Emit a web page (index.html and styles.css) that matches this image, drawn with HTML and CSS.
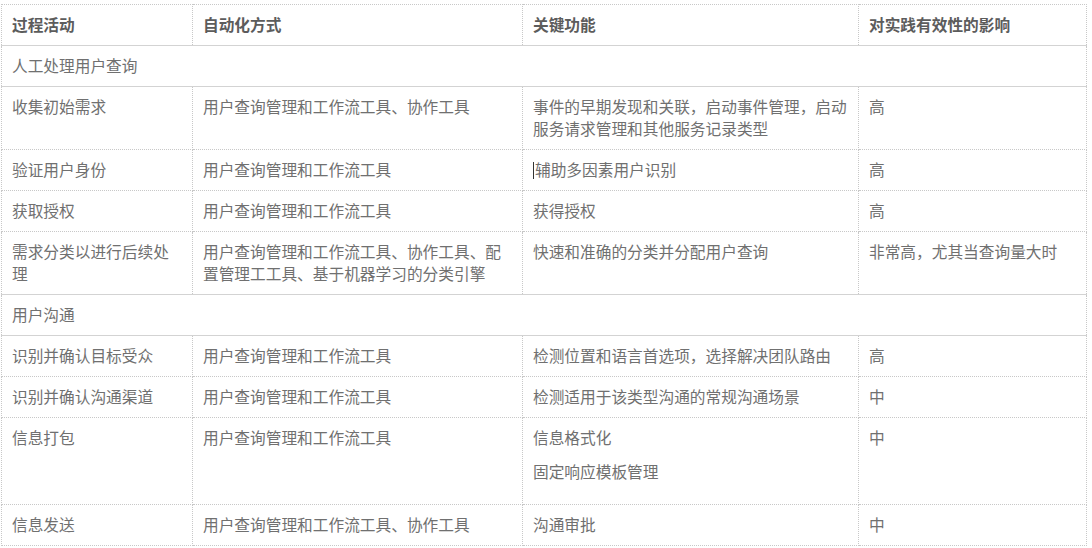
FILE: index.html
```html
<!DOCTYPE html>
<html lang="zh-CN">
<head>
<meta charset="utf-8">
<title>过程活动</title>
<link rel="stylesheet" href="styles.css">
</head>
<body>
<div class="wrap">
<table class="tbl">
  <colgroup>
    <col class="c1"><col class="c2"><col class="c3"><col class="c4">
  </colgroup>
  <thead>
    <tr><th>过程活动</th><th>自动化方式</th><th>关键功能</th><th>对实践有效性的影响</th></tr>
  </thead>
  <tbody>
    <tr class="section"><td colspan="4">人工处理用户查询</td></tr>
    <tr><td>收集初始需求</td><td>用户查询管理和工作流工具、协作工具</td><td>事件的早期发现和关联，启动事件管理，启动服务请求管理和其他服务记录类型</td><td>高</td></tr>
    <tr><td>验证用户身份</td><td>用户查询管理和工作流工具</td><td><span class="caret"></span>辅助多因素用户识别</td><td>高</td></tr>
    <tr><td>获取授权</td><td>用户查询管理和工作流工具</td><td>获得授权</td><td>高</td></tr>
    <tr><td>需求分类以进行后续处理</td><td>用户查询管理和工作流工具、协作工具、配置管理工工具、基于机器学习的分类引擎</td><td>快速和准确的分类并分配用户查询</td><td>非常高，尤其当查询量大时</td></tr>
    <tr class="section"><td colspan="4">用户沟通</td></tr>
    <tr><td>识别并确认目标受众</td><td>用户查询管理和工作流工具</td><td>检测位置和语言首选项，选择解决团队路由</td><td>高</td></tr>
    <tr><td>识别并确认沟通渠道</td><td>用户查询管理和工作流工具</td><td>检测适用于该类型沟通的常规沟通场景</td><td>中</td></tr>
    <tr><td>信息打包</td><td>用户查询管理和工作流工具</td><td><p class="para">信息格式化</p><p class="para">固定响应模板管理</p></td><td>中</td></tr>
    <tr><td>信息发送</td><td>用户查询管理和工作流工具、协作工具</td><td>沟通审批</td><td>中</td></tr>
  </tbody>
</table>
</div>
</body>
</html>
```

FILE: styles.css
```css
html, body {
  margin: 0;
  padding: 0;
  background: #ffffff;
}

.wrap {
  padding: 4px 0 2px 1px;
  border-bottom: 1px solid #d6d6d6;
}

.tbl {
  width: 1085px;
  table-layout: fixed;
  border-collapse: collapse;
  font-family: "Noto Sans CJK SC", "Liberation Sans", sans-serif;
  font-size: 15.7px;
  line-height: 22px;
  color: #707070;
}

.c1 { width: 191px; }
.c2 { width: 330px; }
.c3 { width: 336px; }
.c4 { width: 228px; }

.tbl th,
.tbl td {
  border: 1px dotted #c8c8c8;
  padding: 9px 10px;
  text-align: left;
  vertical-align: top;
}

.tbl th {
  font-weight: bold;
  color: #5c5c5c;
  border-bottom: 1px solid #d3d3d3;
}

.tbl .section td {
  border-top: 1px solid #d3d3d3;
  border-bottom: 1px solid #d3d3d3;
}

.para {
  margin: 0 0 12px 0;
}

.caret {
  display: inline-block;
  width: 0;
  height: 17px;
  border-left: 1px solid #333333;
  vertical-align: -3px;
  margin-right: 1px;
}
```
